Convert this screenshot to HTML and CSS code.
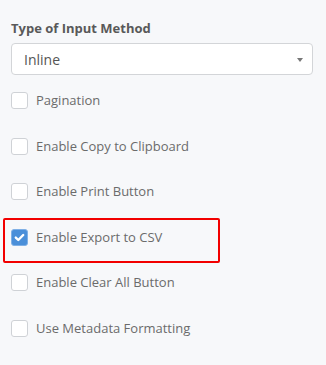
FILE: index.html
```html
<!DOCTYPE html>
<html>
<head>
<meta charset="utf-8">
<link rel="stylesheet" href="styles.css">
</head>
<body>
<div class="panel">
  <div class="field-label">Type of Input Method</div>
  <div class="select">
    <span class="select-value">Inline</span>
    <span class="caret"></span>
  </div>
  <div class="options">
    <label class="opt"><span class="box"></span><span class="txt">Pagination</span></label>
    <label class="opt"><span class="box"></span><span class="txt">Enable Copy to Clipboard</span></label>
    <label class="opt"><span class="box"></span><span class="txt">Enable Print Button</span></label>
    <label class="opt highlight"><span class="box checked"><svg width="11" height="9" viewBox="0 0 11 9"><path d="M1.8 4.6 L4.3 7 L9.2 2" fill="none" stroke="#fff" stroke-width="2.4" stroke-linecap="round" stroke-linejoin="round"/></svg></span><span class="txt">Enable Export to CSV</span></label>
    <label class="opt"><span class="box"></span><span class="txt">Enable Clear All Button</span></label>
    <label class="opt"><span class="box"></span><span class="txt">Use Metadata Formatting</span></label>
  </div>
</div>
</body>
</html>
```

FILE: styles.css
```css
html, body {
  margin: 0;
  padding: 0;
  background: #f7f8fa;
}
body {
  font-family: "Open Sans", "Liberation Sans", sans-serif;
  width: 326px;
  height: 365px;
  overflow: hidden;
}
.panel {
  padding: 19px 13px 0 11px;
}
.field-label {
  font-size: 13px;
  font-weight: 700;
  color: #595959;
  line-height: 18px;
}
.select {
  margin-top: 6px;
  height: 32px;
  box-sizing: border-box;
  border: 1px solid #d3d5d8;
  border-radius: 4px;
  background: #fff;
  display: flex;
  align-items: center;
  justify-content: space-between;
  padding: 0 9px 0 12px;
}
.select-value {
  font-size: 14px;
  color: #555;
}
.caret {
  width: 0;
  height: 0;
  border-left: 3.5px solid transparent;
  border-right: 3.5px solid transparent;
  border-top: 4px solid #777;
  margin-top: 2px;
}
.options {
  margin-top: 17px;
  display: flex;
  flex-direction: column;
  gap: 28.5px;
}
.opt {
  display: flex;
  align-items: center;
  height: 17px;
  position: relative;
}
.box {
  width: 17px;
  height: 17px;
  box-sizing: border-box;
  border: 1px solid #cfd2d6;
  border-radius: 3px;
  background: #fff;
  display: flex;
  align-items: center;
  justify-content: center;
  flex: none;
}
.box.checked {
  background: #4a8fd9;
  border-color: #7fb0e6;
}
.txt {
  margin-left: 8px;
  font-size: 13px;
  color: #6b6b6b;
  line-height: 17px;
}
.highlight::before {
  content: "";
  position: absolute;
  left: -8px;
  top: -11px;
  width: 217px;
  height: 45px;
  box-sizing: border-box;
  border: 2px solid #f20000;
  border-radius: 2px;
}
```
